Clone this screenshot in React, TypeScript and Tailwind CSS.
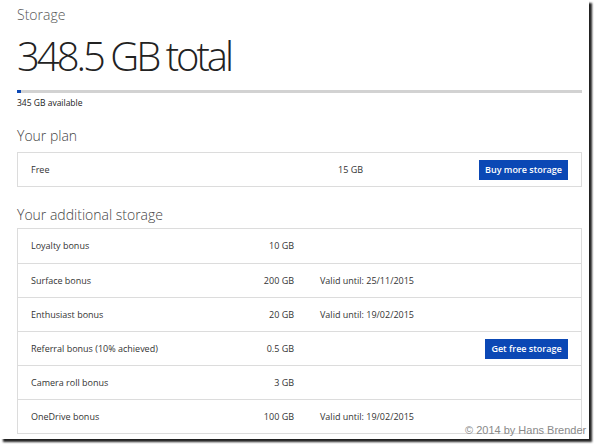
type Bonus = {
  label: string;
  amount: string;
  valid?: string;
  action?: string;
};

const bonuses: Bonus[] = [
  { label: "Loyalty bonus", amount: "10 GB" },
  { label: "Surface bonus", amount: "200 GB", valid: "Valid until: 25/11/2015" },
  { label: "Enthusiast bonus", amount: "20 GB", valid: "Valid until: 19/02/2015" },
  { label: "Referral bonus (10% achieved)", amount: "0.5 GB", action: "Get free storage" },
  { label: "Camera roll bonus", amount: "3 GB" },
  { label: "OneDrive bonus", amount: "100 GB", valid: "Valid until: 19/02/2015" },
];

function BlueButton({ children, width }: { children: string; width: string }) {
  return (
    <button
      className={`flex h-[20px] items-center justify-center bg-[#0b48b5] text-[9px] font-semibold text-white ${width}`}
    >
      {children}
    </button>
  );
}

export default function App() {
  return (
    <div className="relative h-[444px] w-[594px] overflow-hidden bg-white">
      <div
        className="h-[439px] w-[589px] bg-white shadow-[3px_3px_2px_#222] text-[#333]"
        style={{ fontFamily: '"Open Sans", "Noto Sans", sans-serif' }}
      >
        <div className="flex flex-col pl-[17px] pr-[7px]">
          <div className="pt-[5px] text-[14px] font-light leading-[20px] text-[#555]">Storage</div>
          <div className="mt-[9px] text-[40px] font-light leading-[44px] tracking-[-3px] text-[#222]">
            348.5 GB total
          </div>
          <div className="mt-[12px] flex h-[3px] w-full bg-[#d2d2d2]">
            <div className="h-full w-[4px] bg-[#0b48b5]" />
          </div>
          <div className="mt-[4px] text-[8.5px] leading-[12px] text-[#222]">345 GB available</div>

          <div className="mt-[17px] text-[14px] font-light leading-[20px] text-[#444]">Your plan</div>
          <div className="mt-[6px] flex h-[35px] items-center border border-[#dcdcdc] pl-[13px] pr-[13px] text-[9px]">
            <div className="w-[307px]">Free</div>
            <div className="flex-1">15 GB</div>
            <BlueButton width="w-[89px]">Buy more storage</BlueButton>
          </div>

          <div className="mt-[18px] text-[14px] font-light leading-[20px] text-[#444]">
            Your additional storage
          </div>
          <div className="mt-[3px] flex flex-col border border-[#dcdcdc]">
            {bonuses.map((b, i) => (
              <div
                key={b.label}
                className={`flex h-[34px] items-center pl-[13px] pr-[13px] text-[9px] ${
                  i > 0 ? "border-t border-[#dcdcdc]" : ""
                }`}
              >
                <div className="w-[190px]">{b.label}</div>
                <div className="w-[73px] text-right">{b.amount}</div>
                <div className="ml-[26px] flex-1">{b.valid}</div>
                {b.action && <BlueButton width="w-[83px]">{b.action}</BlueButton>}
              </div>
            ))}
          </div>
        </div>
      </div>
      <div
        className="absolute left-[465px] top-[423px] text-[11px] leading-[14px] text-[#8a8a8a]"
        style={{ fontFamily: '"Liberation Sans", Arial, sans-serif' }}
      >
        © 2014 by Hans Brender
      </div>
    </div>
  );
}
